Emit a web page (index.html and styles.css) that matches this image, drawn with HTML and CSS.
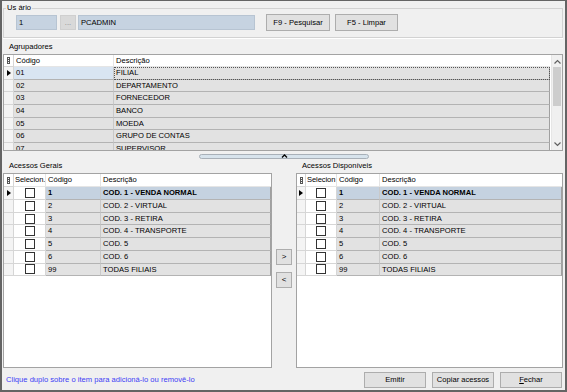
FILE: index.html
```html
<!DOCTYPE html>
<html lang="pt-br">
<head>
    <meta charset="UTF-8">
    <title>Acessos</title>
    <link rel="stylesheet" href="styles.css">
</head>
<body>
    <div class="window">
        <fieldset class="group">
            <legend>Us ário</legend>
            <div class="user-row">
                <div class="field code">1</div>
                <div class="field dots">...</div>
                <div class="field name">PCADMIN</div>
                <button class="btn search">F9 - Pesquisar</button>
                <button class="btn clear">F5 - Limpar</button>
            </div>
        </fieldset>

        <div class="label agr-label">Agrupadores</div>
        <div class="grid agr">
            <div class="grid-body">
                <div class="row head">
                    <div class="cell ind"><span class="chooser"></span></div>
                    <div class="cell">Código</div>
                    <div class="cell">Descrição</div>
                </div>
                <div class="row">
                    <div class="cell ind"><span class="ptr"></span></div>
                    <div class="cell current">01</div>
                    <div class="cell focus">FILIAL</div>
                </div>
                <div class="row"><div class="cell ind"></div><div class="cell">02</div><div class="cell">DEPARTAMENTO</div></div>
                <div class="row"><div class="cell ind"></div><div class="cell">03</div><div class="cell">FORNECEDOR</div></div>
                <div class="row"><div class="cell ind"></div><div class="cell">04</div><div class="cell">BANCO</div></div>
                <div class="row"><div class="cell ind"></div><div class="cell">05</div><div class="cell">MOEDA</div></div>
                <div class="row"><div class="cell ind"></div><div class="cell">06</div><div class="cell">GRUPO DE CONTAS</div></div>
                <div class="row"><div class="cell ind"></div><div class="cell">07</div><div class="cell">SUPERVISOR</div></div>
            </div>
            <div class="scrollbar">
                <svg class="arrow" width="9" height="8" viewBox="0 0 9 8"><polyline points="1.5,5.5 4.5,2.5 7.5,5.5" fill="none" stroke="#606060" stroke-width="1.2"/></svg>
                <div class="track"><div class="thumb"></div></div>
                <svg class="arrow" width="9" height="8" viewBox="0 0 9 8"><polyline points="1.5,2.5 4.5,5.5 7.5,2.5" fill="none" stroke="#606060" stroke-width="1.2"/></svg>
            </div>
        </div>

        <div class="splitter">
            <svg width="7" height="4" viewBox="0 0 7 4"><polyline points="1,3.5 3.5,1 6,3.5" fill="none" stroke="#000" stroke-width="1.3"/></svg>
        </div>

        <div class="access">
            <div class="panel left">
                <div class="label">Acessos Gerais</div>
                <div class="grid acc">
                    <div class="row head">
                        <div class="cell ind"><span class="chooser"></span></div>
                        <div class="cell sel">Selecion.</div>
                        <div class="cell">Código</div>
                        <div class="cell">Descrição</div>
                    </div>
                    <div class="row selected">
                        <div class="cell ind"><span class="ptr"></span></div>
                        <div class="cell chk"><span class="box"></span></div>
                        <div class="cell">1</div>
                        <div class="cell">COD. 1 - VENDA NORMAL</div>
                    </div>
                    <div class="row"><div class="cell ind"></div><div class="cell chk"><span class="box"></span></div><div class="cell">2</div><div class="cell">COD. 2 - VIRTUAL</div></div>
                    <div class="row"><div class="cell ind"></div><div class="cell chk"><span class="box"></span></div><div class="cell">3</div><div class="cell">COD. 3 - RETIRA</div></div>
                    <div class="row"><div class="cell ind"></div><div class="cell chk"><span class="box"></span></div><div class="cell">4</div><div class="cell">COD. 4 - TRANSPORTE</div></div>
                    <div class="row"><div class="cell ind"></div><div class="cell chk"><span class="box"></span></div><div class="cell">5</div><div class="cell">COD. 5</div></div>
                    <div class="row"><div class="cell ind"></div><div class="cell chk"><span class="box"></span></div><div class="cell">6</div><div class="cell">COD. 6</div></div>
                    <div class="row"><div class="cell ind"></div><div class="cell chk"><span class="box"></span></div><div class="cell">99</div><div class="cell">TODAS FILIAIS</div></div>
                </div>
            </div>

            <div class="move">
                <button class="btn small">&gt;</button>
                <button class="btn small">&lt;</button>
            </div>

            <div class="panel right">
                <div class="label">Acessos Disponíveis</div>
                <div class="grid acc">
                    <div class="row head">
                        <div class="cell ind"><span class="chooser"></span></div>
                        <div class="cell sel">Selecion</div>
                        <div class="cell">Código</div>
                        <div class="cell">Descrição</div>
                    </div>
                    <div class="row selected">
                        <div class="cell ind"><span class="ptr"></span></div>
                        <div class="cell chk"><span class="box"></span></div>
                        <div class="cell">1</div>
                        <div class="cell">COD. 1 - VENDA NORMAL</div>
                    </div>
                    <div class="row"><div class="cell ind"></div><div class="cell chk"><span class="box"></span></div><div class="cell">2</div><div class="cell">COD. 2 - VIRTUAL</div></div>
                    <div class="row"><div class="cell ind"></div><div class="cell chk"><span class="box"></span></div><div class="cell">3</div><div class="cell">COD. 3 - RETIRA</div></div>
                    <div class="row"><div class="cell ind"></div><div class="cell chk"><span class="box"></span></div><div class="cell">4</div><div class="cell">COD. 4 - TRANSPORTE</div></div>
                    <div class="row"><div class="cell ind"></div><div class="cell chk"><span class="box"></span></div><div class="cell">5</div><div class="cell">COD. 5</div></div>
                    <div class="row"><div class="cell ind"></div><div class="cell chk"><span class="box"></span></div><div class="cell">6</div><div class="cell">COD. 6</div></div>
                    <div class="row"><div class="cell ind"></div><div class="cell chk"><span class="box"></span></div><div class="cell">99</div><div class="cell">TODAS FILIAIS</div></div>
                </div>
            </div>
        </div>

        <div class="footer">
            <span class="hint">Clique duplo sobre o item para adicioná-lo ou removê-lo</span>
            <button class="btn action">Emitir</button>
            <button class="btn action">Copiar acessos</button>
            <button class="btn action"><u>F</u>echar</button>
        </div>
    </div>
</body>
</html>
```

FILE: styles.css
```css
* {
    box-sizing: border-box;
}

body {
    margin: 0;
    font-family: "Liberation Sans", Arial, sans-serif;
    font-size: 7.6px;
    color: #000;
    background: #f0f0f0;
}

.window {
    width: 567px;
    height: 392px;
    background: #f0f0f0;
    border: solid #646464;
    border-width: 1px 2px 2px 2px;
    padding: 0 2px 0 1px;
    display: flex;
    flex-direction: column;
}

/* grupo usuario */
.group {
    margin: 2px 0 0 0;
    padding: 1px 0 6px 2px;
    border: 1px solid #d2d2d2;
    box-shadow: 0 1px 0 #fff;
}

.group legend {
    padding: 0 1px;
    line-height: 10px;
}

.user-row {
    display: flex;
    align-items: center;
    height: 17px;
    margin-left: 10px;
}

.field {
    height: 15px;
    line-height: 13px;
    padding-left: 2px;
    background: #c6d3e1;
    border: 1px solid #b7c4d2;
}

.field.code {
    width: 41px;
}

.field.dots {
    width: 16px;
    margin-left: 3px;
    background: #d9d9d9;
    border-color: #cfcfcf;
    color: #8a8a8a;
    text-align: center;
    padding: 0;
}

.field.name {
    width: 177px;
    margin-left: 2px;
}

.btn {
    font: inherit;
    color: #000;
    background: #e1e1e1;
    border: 1px solid #adadad;
    padding: 0;
    cursor: pointer;
}

.btn.search {
    width: 64px;
    height: 17px;
    margin-left: 11px;
}

.btn.clear {
    width: 63px;
    height: 17px;
    margin-left: 5px;
}

.label {
    line-height: 9px;
    padding-left: 6px;
}

.agr-label {
    margin-top: 4px;
    line-height: 10px;
}

/* grades */
.grid {
    border: 1px solid #a3a3a3;
    background: #fff;
    overflow: hidden;
}

.grid.agr {
    margin-top: 2px;
    height: 97px;
    display: flex;
}

.grid-body {
    flex: 1;
    overflow: hidden;
}

.row {
    display: grid;
    height: 12.7px;
}

.agr .row {
    grid-template-columns: 10px 100px 1fr;
    margin-right: 1px;
}

.left .row {
    grid-template-columns: 10px 32px 55px 1fr;
}

.right .row {
    grid-template-columns: 9px 31px 43px 1fr;
}

.cell {
    background: #e2e2e2;
    border-right: 1px solid #c9c9c9;
    border-bottom: 1px solid #b3b3b3;
    padding-left: 2px;
    line-height: 11.7px;
    white-space: nowrap;
    overflow: hidden;
}

.cell:last-child {
    border-right: 1px solid #a0a0a0;
}

.row.head {
    height: 12px;
}

.acc .row.head {
    height: 13.4px;
}

.head .cell {
    background: #fff;
    border-right-color: #e5e5e5;
    border-bottom-color: #e5e5e5;
    line-height: 11px;
}

.acc .head .cell {
    line-height: 12.4px;
}

.head .cell.sel {
    padding-left: 1px;
    letter-spacing: -0.1px;
}

.head .cell:last-child {
    border-right: none;
}

.cell.ind {
    background: #f4f4f4;
    padding: 0;
    display: flex;
    align-items: center;
    justify-content: center;
    border-right-color: #d6d6d6;
    border-bottom-color: #d6d6d6;
}

.head .cell.ind {
    background: #fff;
}

.chooser {
    width: 3px;
    height: 7px;
    border-left: 1px solid #555;
    border-right: 1px solid #555;
    background: repeating-linear-gradient(#555 0 1px, transparent 1px 2px);
}

.ptr {
    width: 0;
    height: 0;
    border-left: 4px solid #000;
    border-top: 3.5px solid transparent;
    border-bottom: 3.5px solid transparent;
}

.cell.current {
    background: #d9e5f2;
}

.cell.focus {
    outline: 1px dotted #555;
    outline-offset: -1px;
}

.cell.chk {
    background: #fff;
    padding: 0;
    display: flex;
    align-items: center;
    justify-content: center;
    border-right-color: #d6d6d6;
    border-bottom-color: #d6d6d6;
}

.box {
    width: 10px;
    height: 10px;
    border: 1px solid #333;
    background: #fff;
}

.row.selected .cell {
    font-weight: bold;
}

.row.selected .cell:nth-child(3),
.row.selected .cell:nth-child(4) {
    background: #c5d2e0;
}

.scrollbar {
    width: 11px;
    background: #f0f0f0;
    border-left: 1px solid #e6e6e6;
    display: flex;
    flex-direction: column;
    align-items: center;
}

.scrollbar .arrow {
    flex: none;
    margin: 3px 0 1px;
}

.scrollbar .arrow:last-child {
    margin: 1px 0 2px;
}

.track {
    flex: 1;
    width: 100%;
    padding: 0 1px;
}

.thumb {
    height: 39px;
    background: #cdcdcd;
}

.splitter {
    margin: 3px 0 0 196px;
    width: 170px;
    height: 5px;
    background: #d7e3ec;
    border: 1px solid #a8b0b8;
    border-radius: 3px;
    display: flex;
    justify-content: center;
    align-items: center;
}

.splitter svg {
    margin-top: -1px;
}

/* acessos */
.access {
    margin-top: 2px;
    height: 207px;
    display: flex;
}

.panel {
    display: flex;
    flex-direction: column;
}

.panel.left {
    width: 269px;
}

.panel.right {
    flex: 1;
}

.grid.acc {
    margin-top: 3px;
    flex: 1;
}

.move {
    width: 24px;
    padding: 88px 0 0 4px;
    display: flex;
    flex-direction: column;
    gap: 7px;
}

.btn.small {
    width: 16px;
    height: 16px;
    font-size: 8px;
    line-height: 12px;
}

.footer {
    flex: 1;
    display: flex;
    align-items: center;
    gap: 6px;
    padding: 1px 1px 0 3px;
}

.hint {
    flex: 1;
    color: #3d3df5;
}

.btn.action {
    width: 62px;
    height: 16px;
}

.btn u {
    text-decoration: underline;
}
```
